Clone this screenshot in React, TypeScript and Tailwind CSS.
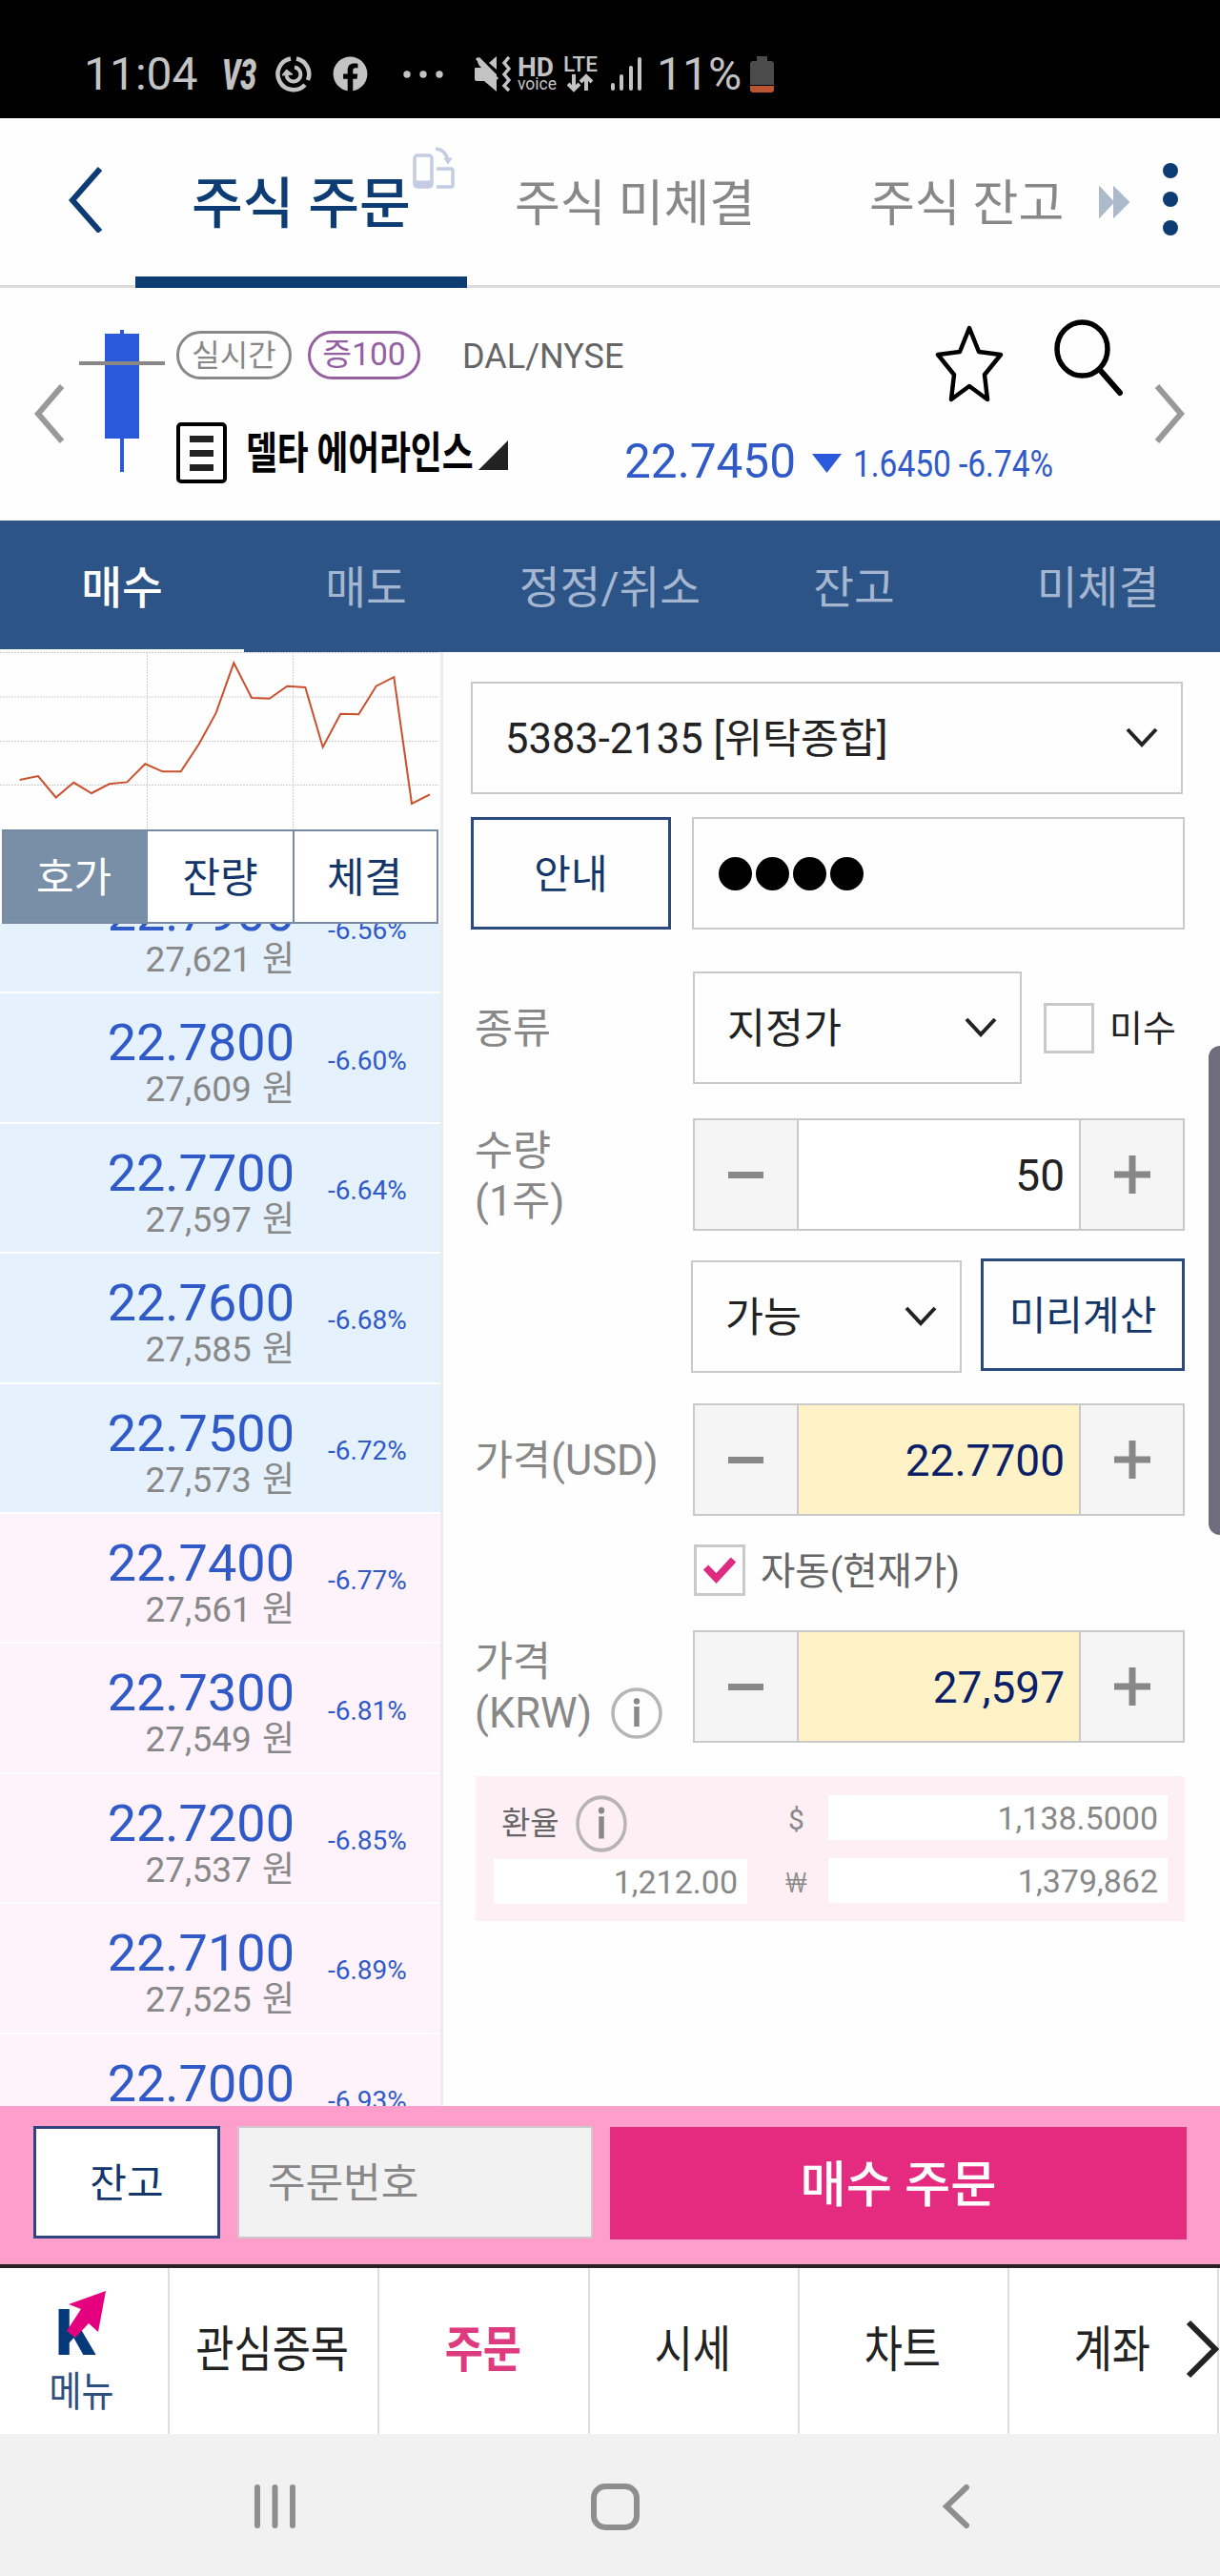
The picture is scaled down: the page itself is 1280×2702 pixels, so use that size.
import type { ReactNode } from "react";
import { FaFacebook } from "react-icons/fa";

const KR = "font-['Roboto','Noto_Sans_CJK_KR',sans-serif]";

const MARKET_TABS = ["매수", "매도", "정정/취소", "잔고", "미체결"];

const QUOTES = [
  { price: "22.7900", krw: "27,621", rate: "-6.56%", ask: true },
  { price: "22.7800", krw: "27,609", rate: "-6.60%", ask: true },
  { price: "22.7700", krw: "27,597", rate: "-6.64%", ask: true },
  { price: "22.7600", krw: "27,585", rate: "-6.68%", ask: true },
  { price: "22.7500", krw: "27,573", rate: "-6.72%", ask: true },
  { price: "22.7400", krw: "27,561", rate: "-6.77%", ask: false },
  { price: "22.7300", krw: "27,549", rate: "-6.81%", ask: false },
  { price: "22.7200", krw: "27,537", rate: "-6.85%", ask: false },
  { price: "22.7100", krw: "27,525", rate: "-6.89%", ask: false },
  { price: "22.7000", krw: "27,513", rate: "-6.93%", ask: false },
];

const BOTTOM_TABS = ["관심종목", "주문", "시세", "차트", "계좌"];

function StatusBar() {
  return (
    <header className="flex h-[124px] shrink-0 items-center bg-black pt-[31px] pl-[88px] text-[#c3c3c3]">
      <span className="w-[144px] text-[48px] leading-none">11:04</span>
      <svg width="38" height="40" viewBox="0 0 38 40" fill="currentColor">
        <text x="1" y="36" fontSize="45" fontWeight="900" fontStyle="italic" textLength="36" lengthAdjust="spacingAndGlyphs">V3</text>
      </svg>
      <svg className="ml-[18px]" width="40" height="40" viewBox="0 0 40 40" fill="none" stroke="currentColor" strokeWidth="4.500">
        <path d="M17 3.500A16.500 16.500 0 1 0 32 31" />
        <path d="M23 3.500A16.500 16.500 0 0 1 35 26" />
        <path d="M21 12.500a7.500 7.500 0 1 1-8.500 8.500" strokeWidth="4" />
        <path d="M8 21l4.500-6 6.500 5z" fill="currentColor" strokeWidth="1" />
      </svg>
      <FaFacebook className="ml-[21px]" size={37} />
      <svg className="ml-[37px]" width="42" height="8" fill="currentColor">
        <circle cx="4" cy="4" r="3.700" />
        <circle cx="21" cy="4" r="3.700" />
        <circle cx="38" cy="4" r="3.700" />
      </svg>
      <svg className="ml-[33px]" width="38" height="38" viewBox="0 0 38 38">
        <path d="M2 11h3L2 3l3-2 18 18v18L10 26H2q-2 0-2-2V13q0-2 2-2zM15 7l8-7v14z" fill="currentColor" />
        <path d="M0 5l7 7H0z" fill="black" />
        <path d="M2 2l22 22" stroke="currentColor" strokeWidth="3" />
        <path d="M36 1l-5 6 5 6-5 6 5 6-5 6 5 5" fill="none" stroke="currentColor" strokeWidth="3.500" />
      </svg>
      <div className="ml-[7px] flex w-[39px] flex-col">
        <span className="text-[28px] leading-[21px] font-bold">HD</span>
        <span className="text-[17.500px] leading-[15px]">voice</span>
      </div>
      <div className="ml-[8px] flex w-[38px] flex-col items-center">
        <span className="text-[22.500px] leading-[19px] font-medium">LTE</span>
        <svg width="28" height="20" viewBox="0 0 28 20" fill="none" stroke="currentColor" strokeWidth="4">
          <path d="M7 1v16M1 11l6 6 6-6M20 18V4M14 9l6-6 6 6" />
        </svg>
      </div>
      <svg className="ml-[13px]" width="34" height="36" fill="currentColor">
        <rect y="27" width="4" height="8" rx="2" />
        <rect x="9" y="18" width="4" height="17" rx="2" />
        <rect x="19" y="9" width="4" height="26" rx="2" />
        <rect x="28" width="4" height="35" rx="2" />
      </svg>
      <span className="ml-[14px] w-[98px] text-[48px] leading-none">11%</span>
      <svg width="25" height="38" viewBox="0 0 25 38">
        <path d="M7 0h11v5h5l2 2v23H0V7l2-2h5z" fill="#4b4b4b" />
        <path d="M0 31h25v5l-2 2H2l-2-2z" fill="#bd5532" />
      </svg>
    </header>
  );
}

function TitleTabs() {
  return (
    <nav className="relative flex h-[178px] shrink-0 items-center border-b-[3px] border-[#dcdcdc] text-[52px] leading-none text-[#888]">
      <svg className="mb-[5px] ml-[70px]" width="38" height="70" viewBox="0 0 38 70" fill="none" stroke="#0d3b74" strokeWidth="6">
        <path d="M35 3L6 36l29 33" />
      </svg>
      <div className="mt-[6px] ml-[93px] w-[339px] text-[58.500px] font-medium text-[#0d3b74]">주식 주문</div>
      <div className="mt-[7px] w-[372px]">주식 미체결</div>
      <div className="mt-[7px] w-[241px]">주식 잔고</div>
      <svg width="34" height="34" viewBox="0 0 34 34" fill="#acbacb" stroke="#acbacb" strokeWidth="2">
        <path d="M1 2l14 15L1 32zM16 2l15 15-15 15z" />
      </svg>
      <div className="mb-[6px] ml-[33px] flex flex-col gap-[14px]">
        <i className="size-[16px] rounded-full bg-[#0d3b74]" />
        <i className="size-[16px] rounded-full bg-[#0d3b74]" />
        <i className="size-[16px] rounded-full bg-[#0d3b74]" />
      </div>
      <span className="absolute -bottom-[3px] left-[142px] h-[12px] w-[348px] bg-[#0d3b74]" />
      <svg className="absolute top-[30px] left-[432px]" width="46" height="46" viewBox="0 0 46 46" fill="none" stroke="#c3cce2" strokeWidth="3.500">
        <rect x="3" y="9" width="18" height="33" rx="3" />
        <path d="M3 39h18" strokeWidth="7" />
        <path d="M26 23h15q2 0 2 2v15q0 2-2 2H26M25 2q11 1 13 13" />
        <path d="M34 12h8l-4 6z" fill="#c3cce2" strokeWidth="1" />
      </svg>
    </nav>
  );
}

function StockHeader() {
  return (
    <section className="flex h-[244px] shrink-0">
      <svg className="mt-[101px] ml-[35px] shrink-0" width="34" height="62" viewBox="0 0 34 62" fill="none" stroke="#999" strokeWidth="6">
        <path d="M30 2L5 31l25 29" />
      </svg>
      <svg className="mt-[44px] ml-[14px] shrink-0" width="90" height="150">
        <rect x="43" width="4" height="149" fill="#2b59dc" />
        <rect x="27" y="4" width="36" height="110" fill="#2b59dc" />
        <rect y="33" width="90" height="4" fill="#888" />
      </svg>
      <div className="ml-[12px] flex w-[472px] shrink-0 flex-col">
        <div className="mt-[45px] flex h-[51px] items-center">
          <span className="flex h-[51px] w-[121px] shrink-0 items-center justify-center rounded-full border-[3px] border-[#888] text-[32px] text-[#888]">실시간</span>
          <span className="ml-[17px] flex h-[51px] w-[118px] shrink-0 items-center justify-center rounded-full border-[3px] border-[#9460a2] text-[33.500px] text-[#9460a2]">증100</span>
          <span className="mt-[2px] ml-[44px] text-[36px] text-[#666]">DAL/NYSE</span>
        </div>
        <div className="mt-[44px] flex h-[66px] items-center">
          <span className="flex h-[64px] w-[53px] shrink-0 flex-col items-center justify-center gap-[8px] rounded-[5px] border-4 border-black">
            <i className="h-[7px] w-[25px] bg-[#222]" />
            <i className="h-[7px] w-[25px] bg-[#222]" />
            <i className="h-[7px] w-[25px] bg-[#222]" />
          </span>
          <span className="ml-[20px] w-[244px] shrink-0 origin-left scale-x-[.775] text-[46px] leading-none font-bold whitespace-nowrap text-black">
            델타 에어라인스
          </span>
          <svg width="31" height="31" className="mt-[5px]">
            <path d="M31 0v31H0z" fill="#222" />
          </svg>
        </div>
      </div>
      <div className="-ml-[2px] flex w-[555px] shrink-0 flex-col">
        <div className="flex h-[130px]">
          <svg className="mt-[37px] ml-[325px]" width="74" height="84" viewBox="0 0 74 84" fill="none" stroke="black" strokeWidth="4.500" strokeLinejoin="round">
            <path d="M37 5l10 25 23 3-17 21 3 26-19-14-19 14 3-26L4 33l23-3z" />
          </svg>
          <svg className="mt-[31px] ml-[50px]" width="76" height="84" viewBox="0 0 76 84" fill="none" stroke="black">
            <ellipse cx="31.500" cy="33" rx="26.500" ry="28" strokeWidth="5.500" />
            <path d="M50 55l21 24" strokeWidth="6" strokeLinecap="round" />
          </svg>
        </div>
        <div className="flex h-[100px] items-center text-[#2f5ac8]">
          <span className="mt-[4px] w-[197px] text-[49.500px]">22.7450</span>
          <svg width="31" height="20" className="mt-[8px]">
            <path d="M0 0h31L15.500 20z" fill="#2b59dc" />
          </svg>
          <span className="mt-[10px] ml-[12px] origin-left scale-x-[.88] text-[38px] whitespace-nowrap">1.6450 -6.74%</span>
        </div>
      </div>
      <svg className="mt-[101px] shrink-0" width="34" height="62" viewBox="0 0 34 62" fill="none" stroke="#999" strokeWidth="6">
        <path d="M4 2l25 29L4 60" />
      </svg>
    </section>
  );
}

function MiniChart() {
  return (
    <svg className="shrink-0" width="462" height="186" viewBox="0 684 462 186" fill="none">
      <path
        d="M0 731h460M0 777.500h460M0 823.500h460M154.500 684v186M307.500 684v186M0 684.500h460"
        stroke="#cfcfcf"
        strokeDasharray="2 1"
      />
      <polyline
        stroke="#c9502c"
        strokeWidth="2"
        points="20.700,818 40,814 58.700,836.500 77.300,820.800 96,832 114.700,822.300 133.300,820.400 152.300,801.300 170.700,809.300 189.700,809.300 208.700,780.600 226.700,747.700 245.300,695.300 264,732 282.700,732.800 301.300,719.700 320.300,721 338.700,783.700 357.300,748.800 376.300,749.200 394.700,719.700 413.300,710.200 432,843 451,833.400"
      />
    </svg>
  );
}

function QuoteList() {
  return (
    <aside className="flex w-[465px] shrink-0 flex-col border-r-[3px] border-[#ececec]">
      <MiniChart />
      <div className="z-10 ml-[2px] flex h-[99px] w-[458px] shrink-0 border-2 border-[#768ba3] bg-white text-[43px] text-[#12366a]">
        <span className="flex w-[151px] items-center justify-center bg-[#798fa8] pt-[3px] pr-[4px] text-white">호가</span>
        <span className="flex w-[152px] items-center justify-center pt-[3px]">잔량</span>
        <span className="flex w-[151px] items-center justify-center border-l-2 border-[#768ba3] pt-[3px] pr-[2px]">체결</span>
      </div>
      <ul className="flex min-h-0 flex-1 flex-col overflow-hidden">
        {QUOTES.map((q) => (
          <li
            key={q.price}
            className={`flex h-[136.400px] shrink-0 border-b-2 border-white first:-mt-[63px] ${q.ask ? "bg-[#e5f1fd]" : "bg-[#fef2fb]"}`}
          >
            <div className="flex w-[309px] flex-col items-end pt-[24px]">
              <span className="text-[54px] leading-[56px] text-[#2f5ac8]">{q.price}</span>
              <span className="text-[37px] leading-[42px] text-[#888] [word-spacing:2px]">{q.krw} 원</span>
            </div>
            <span className="flex flex-1 items-center pt-[6px] pl-[35px] text-[28px] text-[#2f5ac8]">{q.rate}</span>
          </li>
        ))}
      </ul>
    </aside>
  );
}

function Caret() {
  return (
    <svg width="34" height="22" viewBox="0 0 34 22" fill="none" stroke="#222" strokeWidth="4">
      <path d="M2 2l15 16L32 2" />
    </svg>
  );
}

function Select({ label, className }: { label: string; className: string }) {
  return (
    <div className={`flex h-[118px] items-center justify-between border-[2.500px] border-[#c9c9c9] pr-[24px] pl-[34px] text-[43.500px] text-[#222] ${className}`}>
      <span className="pt-[3px]">{label}</span>
      <Caret />
    </div>
  );
}

function Stepper({ value, filled }: { value: string; filled?: boolean }) {
  return (
    <div className="flex h-[118px] w-[516px] border-[2.500px] border-[#c9c9c9] bg-[#f5f5f5]">
      <span className="flex w-[107px] items-center justify-center">
        <i className="h-[7px] w-[37px] bg-[#888]" />
      </span>
      <span
        className={`flex w-[298px] items-center justify-end border-x-2 border-[#c9c9c9] pt-[3px] pr-[15px] text-[46px] ${filled ? "bg-[#fef2c6] text-[#0a1f68]" : "bg-white text-[#222]"}`}
      >
        {value}
      </span>
      <span className="flex flex-1 items-center justify-center">
        <svg width="38" height="40" fill="#888">
          <path d="M0 16.500h15.500V0h7v16.500H38v7H22.500V40h-7V23.500H0z" />
        </svg>
      </span>
    </div>
  );
}

function Info({ className }: { className: string }) {
  return (
    <svg className={className} viewBox="0 0 54 54" preserveAspectRatio="none" fill="none" stroke="#b8b4b6" strokeWidth="3.500">
      <circle cx="27" cy="27" r="25" />
      <path d="M27 20v21" stroke="#888" strokeWidth="5.500" />
      <circle cx="27" cy="14.500" r="3.200" fill="#888" stroke="none" />
    </svg>
  );
}

function Label({ children }: { children: ReactNode }) {
  return <div className="w-[229px] pt-[3px] text-[43.500px] leading-[53px] text-[#888]">{children}</div>;
}

function RateBox({ children, className }: { children: ReactNode; className: string }) {
  return (
    <span className={`flex h-[47px] items-center justify-end bg-white pt-[2px] pr-[10px] text-[34px] text-[#888] ${className}`}>
      {children}
    </span>
  );
}

function OrderForm() {
  return (
    <main className="relative flex flex-1 flex-col pt-[31px] pl-[29px]">
      <Select label="5383-2135 [위탁종합]" className="w-[747px]" />
      <div className="mt-[24px] flex gap-[22px]">
        <button className="h-[118px] w-[210px] border-[3px] border-[#29497f] pt-[2px] text-[42px] text-[#12366a]">안내</button>
        <div className="flex h-[118px] w-[517px] items-center gap-[4px] border-[2.500px] border-[#c9c9c9] pl-[26px]">
          <i className="size-[35px] rounded-full bg-black" />
          <i className="size-[35px] rounded-full bg-black" />
          <i className="size-[35px] rounded-full bg-black" />
          <i className="size-[35px] rounded-full bg-black" />
        </div>
      </div>
      <div className="mt-[44px] ml-[4px] flex items-center">
        <Label>종류</Label>
        <Select label="지정가" className="w-[345px]" />
        <span className="ml-[23px] size-[53px] border-[3px] border-[#c9c9c9]" />
        <span className="mt-[3px] ml-[16px] text-[38px] text-[#222]">미수</span>
      </div>
      <div className="mt-[36px] ml-[4px] flex items-center">
        <Label>
          수량
          <br />
          (1주)
        </Label>
        <Stepper value="50" />
      </div>
      <div className="mt-[29px] ml-[231px] flex gap-[20px]">
        <Select label="가능" className="mt-[2px] w-[284px]" />
        <button className="h-[118px] w-[214px] border-[3px] border-[#29497f] pt-[2px] text-[42px] text-[#12366a]">미리계산</button>
      </div>
      <div className="mt-[32px] ml-[4px] flex items-center">
        <Label>가격(USD)</Label>
        <Stepper value="22.7700" filled />
      </div>
      <div className="mt-[30px] ml-[234px] flex h-[54px] items-center">
        <span className="flex size-[54px] items-center justify-center border-[3px] border-[#c9c9c9]">
          <svg width="34" height="28" viewBox="0 0 34 28" fill="none" stroke="#dd2c7f" strokeWidth="7.500">
            <path d="M2.500 11l11 11.500L31.500 3" />
          </svg>
        </span>
        <span className="mt-[3px] ml-[16px] text-[39.500px] text-[#666]">자동(현재가)</span>
      </div>
      <div className="mt-[36px] ml-[4px] flex items-center">
        <Label>
          가격
          <br />
          <span className="flex items-center gap-[20px]">
            (KRW) <Info className="size-[54px]" />
          </span>
        </Label>
        <Stepper value="27,597" filled />
      </div>
      <div className="mt-[35px] ml-[5px] flex h-[152px] w-[744px] bg-[#fdeff4] pt-[20px] pl-[19px]">
        <div className="flex w-[266px] flex-col">
          <div className="flex h-[67px] items-start pl-[8px]">
            <span className="mt-[6px] text-[33px] leading-[48px] text-[#666]">환율</span>
            <Info className="ml-[17px] h-[60px] w-[54px]" />
          </div>
          <RateBox className="w-[266px]">1,212.00</RateBox>
        </div>
        <div className="flex w-[85px] flex-col gap-[18px] pt-[2px] pl-[18px] text-center text-[30px] leading-[48px] text-[#888]">
          <span>$</span>
          <span className="font-light">₩</span>
        </div>
        <div className="flex flex-col gap-[19px]">
          <RateBox className="w-[356px]">1,138.5000</RateBox>
          <RateBox className="w-[356px]">1,379,862</RateBox>
        </div>
      </div>
      <span className="absolute top-[413px] right-0 h-[513px] w-[12px] rounded-l-[12px] bg-[#6f6c7c]" />
    </main>
  );
}

function OrderBar() {
  return (
    <div className="flex h-[170px] shrink-0 border-b-4 border-[#2b2226] bg-[#fd9fca] pt-[21px] pl-[35px]">
      <button className="h-[118px] w-[196px] border-[3px] border-[#2f4380] bg-white pt-[3px] text-[42px] text-[#12366a]">잔고</button>
      <div className="ml-[18px] flex h-[118px] w-[373px] items-center border-[2.500px] border-[#d0c6cc] bg-[#f2f2f2] pt-[3px] pl-[30px] text-[43px] text-[#888]">
        주문번호
      </div>
      <button className="mt-px ml-[18px] h-[118px] w-[605px] bg-[#e42b80] pt-[5px] text-[52.500px] font-medium text-white">매수 주문</button>
    </div>
  );
}

function BottomTabs() {
  return (
    <nav className="relative flex h-[174px] shrink-0 overflow-hidden bg-white">
      <div className="flex w-[178px] shrink-0 flex-col items-center border-r-2 border-[#dedede] pr-[4px]">
        <svg className="mt-[23px]" width="54" height="72" viewBox="0 0 54 72">
          <text x="-1" y="68" fontSize="67" fontWeight="900" fill="#06397a" textLength="42" lengthAdjust="spacingAndGlyphs">K</text>
          <path d="M52 1L44 44l-10-9-14 15-9-7 15-23-13-5z" fill="#e5007f" />
        </svg>
        <span className="mt-[7px] scale-x-[.86] text-[43px] leading-[56px] whitespace-nowrap text-[#2c4f80]">메뉴</span>
      </div>
      {BOTTOM_TABS.map((t) => (
        <div key={t} className="flex w-[220.300px] shrink-0 items-center justify-center border-r-2 border-[#dedede] pr-[2px]">
          <span className={`scale-x-[.84] text-[52px] leading-none whitespace-nowrap ${t === "주문" ? "font-bold text-[#dd3a80]" : "text-[#222]"}`}>
            {t}
          </span>
        </div>
      ))}
      <svg className="absolute top-[54px] right-0" width="36" height="62" viewBox="0 0 36 62" fill="none" stroke="#222" strokeWidth="6">
        <path d="M3 3l28 28L3 59" />
      </svg>
    </nav>
  );
}

function SystemNav() {
  return (
    <footer className="flex h-[149px] shrink-0 items-center bg-[#f1f1f1] pt-[3px] pl-[266px]">
      <svg width="46" height="48" stroke="#8e8e8e" strokeWidth="6" strokeLinecap="round">
        <path d="M4 4v40M22.500 4v40M41 4v40" />
      </svg>
      <span className="ml-[308px] h-[49px] w-[51px] rounded-[15px] border-[6px] border-[#8e8e8e]" />
      <svg className="ml-[316px]" width="32" height="48" fill="none" stroke="#8e8e8e" strokeWidth="6" strokeLinecap="round">
        <path d="M27 4L6 24l21 20" />
      </svg>
    </footer>
  );
}

export default function App() {
  return (
    <div className={`flex h-[2702px] w-[1280px] flex-col overflow-hidden bg-[#fefefe] ${KR}`}>
      <StatusBar />
      <TitleTabs />
      <StockHeader />
      <nav className="flex h-[138px] shrink-0 bg-[#2d5486] text-[46.500px] text-[#a5b6d1]">
        {MARKET_TABS.map((t, i) => (
          <span
            key={t}
            className={`flex w-[256px] items-center justify-center border-b-[3px] pt-[8px] ${i === 0 ? "border-white font-medium text-white" : "border-transparent"}`}
          >
            {t}
          </span>
        ))}
      </nav>
      <div className="flex min-h-0 flex-1">
        <QuoteList />
        <OrderForm />
      </div>
      <OrderBar />
      <BottomTabs />
      <SystemNav />
    </div>
  );
}
